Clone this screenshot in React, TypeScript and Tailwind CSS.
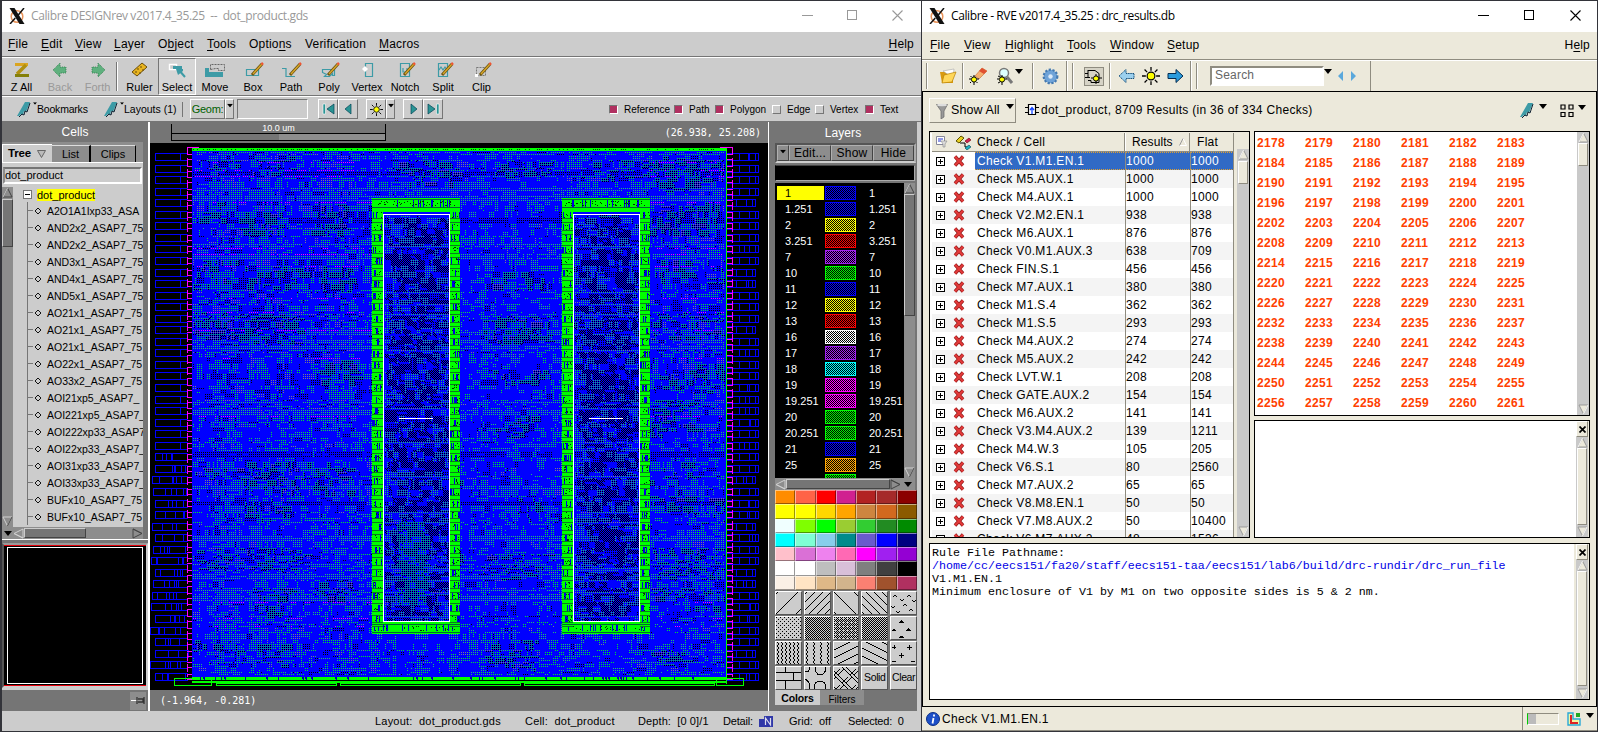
import React, { ReactNode } from "react";

const SANS = "font-['Liberation_Sans',Arial,sans-serif]";

function seeded(seed: number) {
  let s = seed;
  return () => {
    s = (s * 1664525 + 1013904223) >>> 0;
    return s / 4294967296;
  };
}

/* ---------- shared bits ---------- */

function Mn({ t }: { t: string }) {
  const i = t.indexOf("&");
  return (
    <span className="whitespace-pre">
      {t.slice(0, i)}
      <span className="underline underline-offset-2">{t[i + 1]}</span>
      {t.slice(i + 2)}
    </span>
  );
}

function Down({ className = "" }: { className?: string }) {
  return (
    <svg width="8" height="5" viewBox="0 0 8 5" className={"shrink-0 " + className}>
      <path d="M0 0h8L4 5z" fill="#000" />
    </svg>
  );
}

function XLogo() {
  return (
    <svg width="16" height="16" viewBox="0 0 16 16" className="shrink-0">
      <circle cx="8" cy="8.5" r="5.8" fill="none" stroke="#e8935a" strokeWidth="1.5" />
      <path d="M0.5 0h5L15.5 16h-5z" fill="#111" />
      <path d="M15 0L9.3 7M6.3 10L1 16" stroke="#111" strokeWidth="1.5" />
    </svg>
  );
}

function WinControls({ color, gap }: { color: string; gap: string }) {
  return (
    <div className={"flex items-center " + gap}>
      <svg width="11" height="11"><path d="M0 5.5h11" stroke={color} /></svg>
      <svg width="11" height="11"><rect x=".5" y=".5" width="9" height="9" fill="none" stroke={color} /></svg>
      <svg width="11" height="11"><path d="M.5 .5l10 10M10.5 .5l-10 10" stroke={color} strokeWidth="1.1" /></svg>
    </div>
  );
}

function Sun({ size = 14 }: { size?: number }) {
  return (
    <svg width={size} height={size} viewBox="0 0 14 14" className="shrink-0">
      <path d="M7 0v3M7 11v3M0 7h3M11 7h3M2 2l2 2M10 10l2 2M12 2l-2 2M4 10l-2 2" stroke="#000" strokeWidth="1" />
      <circle cx="7" cy="7" r="3" fill="#ff0" stroke="#000" strokeWidth=".9" />
    </svg>
  );
}

function Marker() {
  return (
    <svg width="14" height="15" viewBox="0 0 14 15" className="shrink-0">
      <path d="M8 0h5L9 10l-2-1-1 4-2-1-2 2H0z" fill="#3d9ba6" />
      <path d="M13 1l-3 9-2-1-1 4-2-1-3 3" fill="none" stroke="#123" strokeWidth="1" />
    </svg>
  );
}

/* ---------- left window ---------- */

const raised = "border border-t-white border-l-white border-b-[#757575] border-r-[#757575]";
const sunken = "border border-t-[#757575] border-l-[#757575] border-b-white border-r-white";

const Pencil = () => (
  <>
    <path d="M9 12l10-11" stroke="#6b5410" strokeWidth="3" />
    <path d="M10 11l9-10" stroke="#d8a628" strokeWidth="1.4" />
    <path d="M18.5 1.5l1.5-1.5" stroke="#e53" strokeWidth="2.5" />
  </>
);

function ToolIcon({ k }: { k: string }) {
  const t = "#3d9ba6";
  const body: Record<string, ReactNode> = {
    "Z All": <><path d="M4 1.500h13" stroke="#daa520" strokeWidth="3" /><path d="M15 2L6 11" stroke="#b0900f" strokeWidth="3.600" /><path d="M4 12.500h14" stroke="#84800a" strokeWidth="3" /></>,
    Back: <path d="M3 7l7-7v4h6v6h-6v4z" fill="#5fb07e" stroke="#2c7a48" strokeWidth=".8" strokeDasharray="1 1" />,
    Forth: <path d="M18 7l-7-7v4H5v6h6v4z" fill="#5fb07e" stroke="#2c7a48" strokeWidth=".8" strokeDasharray="1 1" />,
    Ruler: <><path d="M3 9L13 0l5 4L8 13z" fill="#e8b420" stroke="#6b4d08" /><path d="M6 9h2m0-3h2m0 4h2m-1-6h2m0 3h2" stroke="#6b4d08" /></>,
    Select: <><path d="M2.500 1.500h7v5h-7z" fill="#ccc" stroke="#fff" strokeWidth="1.400" /><path d="M6 3h9v3H6z" fill={t} /><path d="M11 6l7 8" fill="none" stroke={t} strokeWidth="2" /><path d="M9 6h7v2l-5 4z" fill={t} /></>,
    Move: <><path d="M0 5h4v4h14v5H0z" fill={t} /><path d="M5.500 6.500v-5h14v6h-6v-2h-3z" fill="none" stroke="#666" strokeDasharray="2 1" /></>,
    Box: <><path d="M3.500 6.500h12v6h-12z" fill="none" stroke={t} strokeWidth="1.200" /><Pencil /></>,
    Path: <><path d="M1 5.500h4v8h9" fill="none" stroke={t} strokeWidth="1.200" /><Pencil /></>,
    Poly: <><path d="M3.500 6.500h12v6h-2v-2l-3 3h-5l2-2-4-2z" fill="none" stroke={t} strokeWidth="1.200" /><Pencil /></>,
    Vertex: <><path d="M8.500 .500h7v13h-7z" fill="none" stroke={t} strokeWidth="1.200" /><path d="M8 3l3 3-3 3-3-3z" fill="#fff" /></>,
    Notch: <><path d="M5.500 .500h9v13h-9zM8 5v4h4v-4" fill="none" stroke={t} strokeWidth="1.200" /><Pencil /></>,
    Split: <><path d="M5.500 .500h9v13h-9zM6 7l2-3 2 3 2-3 2 3" fill="none" stroke={t} strokeWidth="1.200" /><Pencil /></>,
    Clip: <><path d="M5.500 4.500h9v8h-9z" fill="none" stroke="#777" strokeDasharray="2 1" /><path d="M4 11h3v3H4z" fill="#fff" /><Pencil /></>,
  };
  return <svg width="21" height="15" viewBox="0 0 21 15" overflow="visible" className="shrink-0">{body[k]}</svg>;
}

function Tool({ k, className, dim }: { k: string; className: string; dim?: boolean }) {
  const sel = k === "Select";
  return (
    <div className={`flex h-[37px] shrink-0 flex-col items-center pt-[5px] ${className} ${sel ? "border border-b-white border-l-[#757575] border-r-white border-t-[#757575] bg-[#d6d6d6] !pt-[4px]" : ""}`}>
      <ToolIcon k={k} />
      <span className={`mt-[2px] whitespace-pre text-[11px] leading-[15px] ${dim ? "text-[#999]" : "text-black"}`}>{k}</span>
    </div>
  );
}

function NavBtn({ children, className }: { children: ReactNode; className: string }) {
  return <div className={`flex h-[20px] shrink-0 items-center justify-center ${raised} ${className}`}>{children}</div>;
}

function Check({ on, label, className }: { on?: boolean; label: string; className: string }) {
  return (
    <div className={`flex shrink-0 items-center gap-[6px] ${className}`}>
      <span className={`h-[9px] w-[9px] shrink-0 ${on ? "bg-[#b03060]" : "bg-[#ccc]"} ${on ? sunken : raised}`} />
      <span className="text-[10px]">{label}</span>
    </div>
  );
}

function Tri({ d, fill = "#8d8d8d", hi = "#d0d0d0", lo = "#444" }: { d: "u" | "d" | "l" | "r"; fill?: string; hi?: string; lo?: string }) {
  const rot = { u: 0, r: 90, d: 180, l: 270 }[d];
  return (
    <svg width="11" height="11" viewBox="0 0 11 11" className="shrink-0">
      <g transform={`rotate(${rot} 5.5 5.5)`}>
        <path d="M5.500 1l4.500 9h-9z" fill={fill} stroke={d === "u" || d === "r" ? lo : hi} />
        <path d="M5.500 1l-4.500 9" stroke={d === "u" || d === "l" ? hi : lo} />
      </g>
    </svg>
  );
}

const CELLS = [
  "A2O1A1Ixp33_ASA", "AND2x2_ASAP7_75", "AND2x2_ASAP7_75", "AND3x1_ASAP7_75", "AND4x1_ASAP7_75", "AND5x1_ASAP7_75",
  "AO21x1_ASAP7_75", "AO21x1_ASAP7_75", "AO21x1_ASAP7_75", "AO22x1_ASAP7_75", "AO33x2_ASAP7_75", "AOI21xp5_ASAP7_",
  "AOI221xp5_ASAP7_", "AOI222xp33_ASAP7", "AOI22xp33_ASAP7_", "AOI31xp33_ASAP7_", "AOI33xp33_ASAP7_", "BUFx10_ASAP7_75", "BUFx10_ASAP7_75",
];

function CellsPanel() {
  return (
    <div className="flex w-[146px] shrink-0 flex-col bg-[#757575]">
      <div className="flex h-[20px] items-center justify-center text-[12px] tracking-[.1px] text-white">Cells</div>
      <div className="flex h-[21px] w-[141px] items-end border-b border-white bg-[#8d8d8d]">
        <div className="flex h-[18px] w-[50px] items-center gap-[6px] border-l border-t border-white bg-[#ccc] pl-[5px] text-[11.500px] font-bold tracking-[-.2px]">
          Tree
          <svg width="9" height="8" className="shrink-0"><path d="M.5 .5h8L4.500 7.500z" fill="#bbb" stroke="#666" /></svg>
        </div>
        <div className="flex h-[17px] w-[39px] items-center justify-center border-r-2 border-t border-black border-t-[#ddd] text-[11px]">List</div>
        <div className="flex h-[17px] w-[45px] items-center justify-center border-r border-t border-black border-t-[#ddd] text-[11px]">Clips</div>
      </div>
      <div className="flex h-[24px] w-[141px] shrink-0 items-center bg-[#ccc] pl-px">
        <div className="flex h-[17px] w-[139px] items-center border-2 border-b-white border-l-[#8d8d8d] border-r-white border-t-[#757575] text-[11px]">dot_product</div>
      </div>
      <div className="flex h-[340px] w-[141px] shrink-0 bg-[#ccc]">
        <div className="flex w-[11px] shrink-0 flex-col bg-[#8d8d8d]">
          <Tri d="u" />
          <div className="mt-px h-[48px] border border-b-[#444] border-l-[#ccc] border-r-[#444] border-t-[#ccc] bg-[#757575]" />
          <div className="flex-1" />
          <Tri d="d" />
        </div>
        <div className="flex min-w-0 flex-1 flex-col overflow-hidden">
          <div className="flex h-[15px] shrink-0 items-center pl-[10px]">
            <span className="flex h-[9px] w-[9px] items-center justify-center border border-[#757575] bg-white"><span className="h-px w-[5px] bg-black" /></span>
            <span className="ml-[5px] h-[12px] bg-[#ff0] text-[11px] leading-[12px]">dot_product</span>
          </div>
          {CELLS.map((c, i) => (
            <div key={i} className="ml-[14px] flex h-[17px] shrink-0 items-center border-l border-[#757575]">
              <span className="h-px w-[5px] shrink-0 bg-[#757575]" />
              <svg width="8" height="8" className="ml-px shrink-0"><path d="M4 1l3 3-3 3-3-3z" fill="none" stroke="#111" /></svg>
              <span className="ml-[5px] whitespace-nowrap pt-[2px] text-[10.500px]">{c}</span>
            </div>
          ))}
        </div>
      </div>
      <div className="flex h-[12px] w-[141px] shrink-0 items-center bg-[#8d8d8d]">
        <div className="flex w-[11px] justify-center bg-[#8d8d8d]"><Down /></div>
        <Tri d="l" />
        <div className="h-[10px] w-[62px] border border-b-[#444] border-l-[#ccc] border-r-[#444] border-t-[#ccc] bg-[#757575]" />
        <div className="flex-1" />
        <Tri d="r" />
      </div>
      <div className="h-px bg-white" />
      <div className="mt-[3px] flex h-[145px] shrink-0 flex-col border-2 border-[#ccc] border-l-[#555] border-t-[#999] bg-black">
        <div className="h-px bg-red-600" />
        <div className="mx-[3px] my-px flex-1 border border-white" />
        <div className="h-px bg-red-600" />
      </div>
      <div className="h-[2px] bg-[#ccc]" />
      <div className="flex flex-1 items-center justify-end pr-[2px]">
        <div className="flex h-[18px] w-[16px] items-center justify-center bg-[#8d8d8d]">
          <svg width="14" height="9"><path d="M0 4.500h7" stroke="#fff" /><path d="M6 1v7M7 3h5v3H7M13 1v7" stroke="#333" strokeWidth="1.300" fill="#999" /></svg>
        </div>
      </div>
    </div>
  );
}

/* Chip layout plot; local origin is the top-left of the black drawing area. */
const OX = 150;
const OY = 143;
const CELL_ROW = 11.55;

type Seg = { x: number; w: number; k: string };

function buildPlot() {
  const r = seeded(151);
  const X0 = 193, X1 = 725, Y0 = 152, Y1 = 676;
  const out: Record<string, string> = { g: "", k: "", y: "", m: "", t: "" };
  const patches: [number, number, number, number, number][] = [];
  for (const y of [168, 215, 272, 325, 376, 418, 475, 505, 560, 596, 655])
    for (const x of [212, 264, 335, 425, 515, 606, 672, 708]) {
      if (r() < 0.28) continue;
      patches.push([x + (r() - 0.5) * 16, y + (r() - 0.5) * 10, 12 + r() * 18, 6 + r() * 9, 0.4 + r() * 0.5 - (y > 420 ? 0.12 : 0)]);
    }
  const field = (x: number, y: number) => {
    let v = 0;
    for (const [px, py, w, h, a] of patches) {
      const dx = Math.abs(x - px) / w, dy = Math.abs(y - py) / h;
      if (dx < 1.3 && dy < 1.3) v = Math.max(v, a * Math.min(1, (1.3 - dx) * 3) * Math.min(1, (1.3 - dy) * 3));
    }
    return v;
  };
  const lane: number[] = [];
  for (let x = 0; x < 300; x++) lane.push(r());
  let y = Y0;
  while (y < Y1) {
    const phase = (y - Y0) % CELL_ROW;
    const rail = phase < 2.2;
    const rows = rail ? 1 : 1 + Math.floor(r() * 3);
    const top = y < 420;
    const rowK = r();
    const stripe = top ? r() < 0.22 : r() < 0.1;
    const mag = r() < (top ? 0.14 : 0.04);
    const segs: Seg[] = [];
    let x = X0;
    while (x < X1) {
      const w = Math.min(2 * (1 + Math.floor(r() * r() * 6)), X1 - x);
      const inside = y > 214 && y < 621 && ((x > 383 && x < 449) || (x > 573 && x < 639));
      const q = r();
      let k = "";
      if (inside) {
        const cx = x < 500 ? 416 : 606;
        const core = Math.abs(x - cx) < 22;
        const hot = x < 500 && y > 520 && y < 605 && Math.abs(x - 410) < 14;
        if (hot) k = q < 0.7 ? "gk" : "g";
        else if (rail) k = q < 0.85 ? "t" : "y";
        else if (q < (core ? 0.5 : 0.25)) k = "kk";
        else if (q < (core ? 0.72 : 0.5)) k = "tk";
        else if (q < 0.92) k = r() < 0.6 ? "t" : "k";
      } else {
        const f = field(x, y);
        const side = x < 350 || x > 650 ? (top ? 1 : 0.35) : 0.1;
        const ln = lane[Math.floor(x / 4)];
        if (q < f) k = r() < 0.5 ? "gk" : r() < 0.45 ? "g" : r() < 0.6 ? "k" : "yk";
        else if (stripe && q < 0.92) k = rowK < 0.25 ? "k" : "t";
        else {
          const p = 0.5 + (ln - 0.5) * 0.75 + side * 0.14 + (rail ? 0.12 : 0);
          if (r() < p) {
            const c = r();
            k = c < 0.1 + side * 0.14 ? "k" : c < 0.14 + side * 0.26 ? "y" : c < 0.5 ? "t" : "g";
          }
        }
      }
      if (k) segs.push({ x, w, k });
      x += w;
    }
    for (let n = 0; n < rows && y < Y1; n++, y += 2) {
      for (const s of segs) {
        if (r() < 0.08) continue;
        const isMag = mag && n === 0 && (s.x < 370 || s.x > 650) && r() < 0.5;
        const k = isMag ? "m" : s.k;
        out[k[0]] += `M${s.x - OX} ${y - OY + 0.5}h${s.w}`;
        if (k[1]) out[k[1]] += `M${s.x - OX + 1} ${y - OY + 1.5}h${s.w}`;
      }
    }
  }
  return out;
}
const PLOT = buildPlot();

function buildLadders() {
  const r = seeded(77);
  let blue = "", pink = "";
  for (let i = 0; i < 46; i++) {
    const y = Math.round(153 + i * CELL_ROW) - OY;
    const low = i > 25;
    const x0 = (low && r() < 0.35 ? 150 + Math.floor(r() * 4) : 155) - OX;
    blue += `M${x0 + 0.5} ${y + 0.5}H38M${x0 + 0.5} ${y + 7.5}H38M${x0 + 0.5} ${y}v8`;
    if (!low) blue += `M30.500 ${y}v8`;
    else for (let k = 0; k < 5; k++) blue += `M${x0 + 4 + Math.floor(r() * 30) + 0.5} ${y}v8`;
    const e = (r() < 0.12 ? 756 : 759) - OX;
    blue += `M577 ${y + 0.5}H${e}M577 ${y + 7.5}H${e}M${e - 0.5} ${y}v8M${e - 3.5} ${y}v8M${e - 9.5} ${y}v8M${e - 19.5} ${y}v8`;
    if (r() < 0.4) blue += `M${e - 6.5 - Math.floor(r() * 9)} ${y}v8`;
    pink += `M37 ${y + 1.5}h5M37 ${y + 6.5}h5M577 ${y + 1.5}h6M577 ${y + 6.5}h6`;
  }
  return { blue, pink };
}
const LADDER = buildLadders();

function buildFrame(x0: number, seed: number) {
  const r = seeded(seed);
  let gaps = "", bands = "", holes = "", seams = "";
  const x = x0 - OX;
  for (let y = 211 - OY; y < 616 - OY; y += CELL_ROW) {
    const yy = Math.round(y);
    for (const c of [x, x + 78]) {
      const w = c === x ? 11 : 10;
      bands += `M${c} ${yy + 8}h${w}v3h${-w}z`;
      seams += `M${c} ${yy + 7.5}h${w}M${c} ${yy + 11.5}h${w}`;
      for (let k = 0; k < 3; k++) if (r() < 0.6) gaps += `M${c + 1 + Math.floor(r() * 9)} ${yy + 1}h1v6h-1z`;
      if (r() < 0.35) gaps += `M${c + Math.floor(r() * 8)} ${yy + 1}h2v6h-2z`;
      for (let k = 0; k < 8; k++) if (r() < 0.6) holes += `M${c + 2 + Math.floor(r() * 8)} ${yy + 1 + Math.floor(r() * 6)}h1v1h-1z`;
    }
  }
  for (let k = 0; k < 26; k++) {
    const gx = x + 8 + Math.floor(r() * 74);
    if (k % 2) gaps += `M${gx} ${200 - OY}h1v7h-1zM${x + 2 + Math.floor(r() * 82)} ${625 - OY}h1v6h-1z`;
    for (let n = 0; n < 3; n++) holes += `M${x + 3 + Math.floor(r() * 80)} ${(n === 2 ? 626 : 201) - OY + Math.floor(r() * 5)}h1v1h-1z`;
  }
  return { x, gaps, bands, holes, seams };
}
const FRAMES = [buildFrame(372, 9), buildFrame(562, 31)];

function GreenEdge() {
  const r = seeded(5);
  let top = "", bot = "";
  for (let x = 43; x < 574; x += 2) if (r() < 0.45) top += `M${x} 6h1v1h-1z`;
  for (let x = 50; x < 574; x += 3) if (r() < 0.3) bot += `M${x} 534h${1 + Math.floor(r() * 2)}v3h-1z`;
  return (
    <>
      <path d="M42 5h534v3H42z" fill="#0f0" />
      <path d={top} fill="#040" />
      <path d="M42 534h534v3H42zM42 538h534v2H42z" fill="#0f0" />
      <path d="M24.500 535.500h37v7h-37zM66.500 540.500h120v2h-120zM190 540.500h180v2h-180zM374 540.500h190v2h-190zM566.500 535.500h27v7h-27z" fill="none" stroke="#0f0" />
      <path d={bot} fill="#00a" />
      <path d="M576.500 5v536" stroke="#0f0" />
    </>
  );
}

function LayoutPlot() {
  return (
    <svg width="618" height="547" viewBox="0 0 618 547" shapeRendering="crispEdges" className="block shrink-0 bg-black">
      <rect x="42" y="6" width="534" height="531" fill="#00f" />
      <g fill="none" strokeWidth="1" strokeDasharray="1 1">
        <path d={PLOT.g} stroke="#00e632" />
        <path d={PLOT.t} stroke="#20c070" />
        <path d={PLOT.y} stroke="#7c7c8c" />
        <path d={PLOT.k} stroke="#000" />
        <path d={PLOT.m} stroke="#f0f" />
      </g>
      <path d={LADDER.blue} stroke="#00f" fill="none" />
      <path d={LADDER.pink} stroke="#f0f" fill="none" />
      <path d="M37.500 4v530M582.500 4v530" stroke="#f0f" strokeDasharray="8 3" />
      <path d="M37 4.500h12M570 4.500h13" stroke="#f0f" />
      <GreenEdge />
      {FRAMES.map((f, i) => (
        <g key={i}>
          <path d={`M${f.x} 55h88v436h-88zM${f.x + 11} 71v408h67v-408z`} fill="#0f0" fillRule="evenodd" />
          <path d={f.gaps} fill="#00d" />
          <path d={f.holes} fill="#030" />
          <path d={f.bands} fill="#0f0" />
          <path d={f.seams} stroke="#0a7a20" />
          <path d={`M${f.x} 56.500h88M${f.x} 64.500h88M${f.x} 481.500h88M${f.x} 489.500h88`} stroke="#063" />
          <path d={`M${f.x + 11} 69.500h67`} stroke="#00f" strokeWidth="2" />
          <rect x={f.x + 11.5} y="71.500" width="66" height="407" fill="none" stroke="#fff" />
          <path d={`M${f.x + 27} 275.500h34`} stroke="#fff" />
        </g>
      ))}
    </svg>
  );
}

function CanvasPanel() {
  const mono = "font-['DejaVu_Sans_Mono',monospace] text-[10px] text-white";
  return (
    <div className="flex w-[618px] shrink-0 flex-col bg-[#757575]">
      <div className="flex h-[21px] items-start justify-between pl-[21px] pr-[7px]">
        <div className="mt-[2px] flex h-[17px] w-[215px] flex-col border-x border-black">
          <div className="h-[9px] text-center text-[9px] leading-[8px] text-white">10.0 um</div>
          <div className="flex h-[8px] border-y border-black"><div className="w-1/2" /><div className="w-1/2 bg-[#8d8d8d]" /></div>
        </div>
        <div className={`pt-[3px] ${mono}`}>(26.938, 25.208)</div>
      </div>
      <LayoutPlot />
      <div className={`pl-[10px] pt-[3px] ${mono}`}>(-1.964, -0.281)</div>
    </div>
  );
}

const LAYERS: [string, string][] = [
  ["1", "#0000ff"], ["1.251", "#0000ff"], ["2", "#ffff00"], ["3.251", "#ff0000"], ["7", "#a020f0"], ["10", "#00ff00"], ["11", "#0000ff"],
  ["12", "#ffff00"], ["13", "#ff0000"], ["16", "#ffffff"], ["17", "#a020f0"], ["18", "#00ffff"], ["19", "#ff00ff"], ["19.251", "#ff00ff"],
  ["20", "#00ff00"], ["20.251", "#00ff00"], ["21", "#0000ff"], ["25", "#ffa500"], ["", "#00ff00"],
];

const PALETTE = [
  ["#ff8c00", "#ff6347", "#ff0000", "#d02090", "#b22222", "#a52a2a", "#8b0000"],
  ["#ffff00", "#ffff00", "#ffd700", "#ffa500", "#cd853f", "#d2691e", "#8b5a00"],
  ["#f0ffff", "#7fff00", "#00ff00", "#9acd32", "#32cd32", "#228b22", "#008b00"],
  ["#00ffff", "#7fffd4", "#87ceeb", "#008b8b", "#6a5acd", "#0000ff", "#000080"],
  ["#ffc0cb", "#da70d6", "#ee82ee", "#ff69b4", "#ff00ff", "#a020f0", "#9400d3"],
  ["#ffffff", "#ffffff", "#bebebe", "#d8bfd8", "#7f7f7f", "#404040", "#000000"],
  ["#faf0e6", "#ffe4c4", "#deb887", "#d2b48c", "#fa8072", "#a0522d", "#b03060"],
];

function lines(step: number, dx: number, dy: number) {
  let d = "";
  for (let c = -60; c < 90; c += step) d += `M${c} ${dy > 0 ? 0 : 22}l${(dx * 22) / Math.abs(dy)} ${dy > 0 ? 22 : -22}`;
  return d;
}
function dots(test: (x: number, y: number) => boolean) {
  let d = "";
  for (let y = 0; y < 22; y++) for (let x = 0; x < 25; x++) if (test(x, y)) d += `M${x} ${y + 0.5}h1`;
  return d;
}
function zig(step: number) {
  let d = "";
  for (let x = 1; x < 27; x += step) d += `M${x} 0l2 2-2 2 2 2-2 2 2 2-2 2 2 2-2 2 2 2-2 2 2 2`;
  return d;
}
function weave() {
  let d = "";
  for (let y = -8; y < 24; y += 8)
    for (let x = -8; x < 28; x += 8) {
      const odd = ((x + y) / 8) % 2 !== 0;
      for (let k = 0; k < 8; k += 4) d += odd ? `M${x + k} ${y}l8 8` : `M${x + k} ${y + 8}l6-6`;
    }
  return d;
}
const FILLS: string[] = [
  lines(20, 1, -1), lines(8, 1, -1), lines(20, 1, 1), lines(8, 1, 1),
  "M2 5l2-2 2 2M16 5l2-2 2 2M9 7l2 2 2-2M21 8l2 2 2-2M0 14l2 2 2-2M12 14l2-2 2 2M18 19l2-2 2 2M5 19l2 2 2-2",
  dots((x, y) => (y % 4 === 0 && x % 4 === 0) || (y % 4 === 2 && x % 4 === 2)), dots((x, y) => (x + y) % 2 === 0),
  dots((x, y) => (x + y) % 2 === 0 && !(x % 4 === 1 && y % 4 === 1)), dots((x, y) => (x + y) % 2 === 0),
  "M8 5h5M9 4h3M10 3h1M1 13h4M2 12h2M15 13h5M16 12h3M17 11h1M8 20h5M9 19h3",
  zig(4), zig(7), lines(16, 2, -1), lines(16, 2, 1),
  "M3 3v4M1 5h4M18 3v5M16 5h5M10 11v5M8 13h5M1 19h4M20 19h4",
  "M0 5.500h25M0 13.500h25M9 0v5M17 5v8M9 13v9",
  "M0 5q5 0 5-5M10 0q0 7 5 8 6-1 6-8M0 12q5 2 5 10M9 22q0-8 6-8 6 0 6 8",
  weave(),
];

function LayersPanel() {
  const hdr = "flex items-center justify-center border border-t-[#b0b0b0] border-l-[#b0b0b0] border-b-[#444] border-r-[#444] bg-[#8d8d8d] text-[12px] tracking-[.2px]";
  return (
    <div className="flex w-[152px] shrink-0 bg-[#ccc]">
      <div className="flex w-[148px] shrink-0 flex-col bg-[#757575] pl-[6px] text-[12px]">
        <div className="flex h-[21px] items-center justify-center pr-[6px] text-[12px] tracking-[.1px] text-white">Layers</div>
        <div className="flex h-[20px] w-[141px] border-2 border-[#555] border-b-[#ccc] border-r-[#aaa]">
          <div className={`${hdr} w-[12px] !items-start pt-[3px]`}><Down className="scale-75" /></div>
          <div className={`${hdr} w-[42px]`}>Edit...</div>
          <div className={`${hdr} w-[42px]`}>Show</div>
          <div className={`${hdr} flex-1`}>Hide</div>
        </div>
        <div className="mt-[2px] h-[16px] w-[140px] border border-b-[#aaa] border-r-[#aaa] border-t-[#444] bg-black" />
        <div className="mt-[2px] flex h-[295px] w-[140px] shrink-0">
          <div className="flex min-w-0 flex-1 flex-col overflow-hidden bg-black pl-[2px] pt-[2px] text-white">
            {LAYERS.map(([n, c], i) => (
              <div key={i} className="flex h-[16px] shrink-0 items-center">
                <div className={`flex h-[14px] w-[47px] shrink-0 items-center pl-[8px] pt-px text-[11px] ${i === 0 ? "bg-[#ff0] text-black" : ""}`}>{n}</div>
                <svg width="31" height="14" className="ml-px shrink-0" shapeRendering="crispEdges">
                  <defs>
                    <pattern id={`ly${i}`} width="2" height="2" patternUnits="userSpaceOnUse">
                      <rect width="1" height="1" fill={c} /><rect x="1" y="1" width="1" height="1" fill={c} />
                    </pattern>
                  </defs>
                  <rect x=".5" y=".5" width="30" height="13" fill={`url(#ly${i})`} stroke={c} />
                </svg>
                <div className="ml-[13px] h-[14px] pt-px text-[11px] leading-[13px]">{n}</div>
              </div>
            ))}
          </div>
          <div className="flex w-[11px] shrink-0 flex-col bg-[#8d8d8d]">
            <Tri d="u" />
            <div className="h-[122px] border border-b-[#444] border-l-[#ccc] border-r-[#444] border-t-[#ccc] bg-[#757575]" />
            <div className="flex-1" />
            <Tri d="d" />
          </div>
        </div>
        <div className="flex h-[12px] w-[140px] items-center bg-[#8d8d8d]">
          <Tri d="l" />
          <div className="h-[10px] flex-1 border border-b-[#444] border-l-[#ccc] border-r-[#444] border-t-[#ccc] bg-[#757575]" />
          <Tri d="r" />
          <div className="flex w-[14px] justify-center"><Down /></div>
        </div>
        <div className="grid h-[100px] w-[142px] shrink-0 grid-cols-7 grid-rows-7 bg-[#aaa]">
          {PALETTE.flat().map((c, i) => (
            <div key={i} className="border border-b-black/40 border-l-white/50 border-r-black/40 border-t-white/50" style={{ backgroundColor: c }} />
          ))}
        </div>
        <div className="grid h-[100px] w-[142px] shrink-0 grid-cols-5 grid-rows-[repeat(4,24px)] gap-x-[2px] gap-y-px bg-[#757575] pt-px">
          {FILLS.map((d, i) => (
            <div key={i} className="overflow-hidden border border-b-[#555] border-l-white border-r-[#555] border-t-white bg-[#ccc]">
              <svg width="25" height="22" shapeRendering="crispEdges" className="block"><path d={d} fill="none" stroke="#000" strokeWidth="1" /></svg>
            </div>
          ))}
          {["Solid", "Clear"].map((t) => (
            <div key={t} className="flex items-center justify-center border border-b-[#555] border-l-white border-r-[#555] border-t-white bg-[#ccc] text-[10.500px] tracking-[-.4px]">{t}</div>
          ))}
        </div>
        <div className="flex h-[16px] items-start">
          <div className="flex h-[15px] w-[45px] items-center justify-center bg-[#ccc] pt-[2px] text-[10.500px] font-bold tracking-[-.1px]">Colors</div>
          <div className="flex h-[15px] w-[44px] items-center justify-center bg-[#8d8d8d] pt-[3px] text-[10px]">Filters</div>
        </div>
      </div>
    </div>
  );
}

function TealTri({ flip, bar }: { flip?: boolean; bar?: boolean }) {
  return (
    <svg width="13" height="12" viewBox="0 0 13 12">
      <g transform={flip ? "" : "translate(13 0) scale(-1 1)"}>
        <path d={bar ? "M1 1l7 5-7 5z" : "M4 1l6 5-6 5z"} fill="#2a9494" stroke="#045" strokeWidth=".7" />
        {bar && <path d="M9.500 1h2.500v10H9.500z" fill="#2a9494" stroke="#fff" strokeWidth=".6" />}
      </g>
    </svg>
  );
}

function LeftWindow() {
  return (
    <div className="flex h-[730px] w-[919px] shrink-0 flex-col bg-[#ccc]">
      <div className="flex h-[31px] shrink-0 items-center bg-white pb-[2px] pl-[7px] pr-[18px]">
        <XLogo />
        <span className="ml-[6px] flex-1 whitespace-pre font-['Open_Sans',sans-serif] text-[12px] tracking-[-.38px] text-[#999]">Calibre DESIGNrev v2017.4_35.25  --  dot_product.gds</span>
        <WinControls color="#999" gap="gap-[34px]" />
      </div>
      <div className="flex h-[25px] shrink-0 items-center border-b border-[#757575] pl-[6px] text-[12px] tracking-[.2px]">
        <div className="w-[33px]"><Mn t="&File" /></div>
        <div className="w-[34px]"><Mn t="&Edit" /></div>
        <div className="w-[39px]"><Mn t="&View" /></div>
        <div className="w-[44px]"><Mn t="&Layer" /></div>
        <div className="w-[49px]"><Mn t="O&bject" /></div>
        <div className="w-[42px]"><Mn t="&Tools" /></div>
        <div className="w-[56px]"><Mn t="Optio&ns" /></div>
        <div className="w-[74px]"><Mn t="Verific&ation" /></div>
        <div className="flex-1"><Mn t="&Macros" /></div>
        <div className="pr-[7px]"><Mn t="&Help" /></div>
      </div>
      <div className="flex h-[39px] shrink-0 border-b border-t border-b-[#757575] border-t-white">
        <Tool k="Z All" className="w-[39px]" />
        <Tool k="Back" className="w-[38px]" dim />
        <Tool k="Forth" className="w-[37px]" dim />
        <div className="my-[4px] mr-[3px] w-[2px] border-l border-[#757575] bg-white" />
        <Tool k="Ruler" className="w-[37px]" />
        <Tool k="Select" className="w-[38px]" />
        <Tool k="Move" className="w-[38px]" />
        <Tool k="Box" className="w-[38px]" />
        <Tool k="Path" className="w-[38px]" />
        <Tool k="Poly" className="w-[38px]" />
        <Tool k="Vertex" className="w-[38px]" />
        <Tool k="Notch" className="w-[38px]" />
        <Tool k="Split" className="w-[38px]" />
        <Tool k="Clip" className="w-[39px]" />
      </div>
      <div className="flex h-[26px] shrink-0 items-center border-b border-t border-b-[#757575] border-t-white text-[11px]">
        <div className="flex w-[87px] items-center pl-[15px]"><Marker /><Down className="mb-3 scale-50" /><span className="-ml-[2px] pt-[2px] text-[10.500px] tracking-[-.2px]">Bookmarks</span></div>
        <div className="flex w-[93px] items-center pl-[15px]"><Marker /><Down className="mb-3 scale-50" /><span className="-ml-[2px] pt-[2px] text-[10.500px]">Layouts (1)</span></div>
        <div className="mr-[7px] h-[15px] w-px border-l border-[#757575]" />
        <NavBtn className="w-[35px]"><span className="text-[11px] tracking-[-.3px] text-[#005f00]">Geom:</span></NavBtn>
        <NavBtn className="w-[9px]"><Down className="mb-2 scale-75" /></NavBtn>
        <div className={`ml-[3px] mr-[10px] h-[20px] w-[71px] shrink-0 ${sunken}`} />
        <NavBtn className="w-[20px]"><TealTri bar /></NavBtn>
        <NavBtn className="mr-[8px] w-[20px]"><TealTri /></NavBtn>
        <NavBtn className="w-[20px]"><Sun size={13} /></NavBtn>
        <NavBtn className="mr-[8px] w-[9px]"><Down className="mb-2 scale-75" /></NavBtn>
        <NavBtn className="w-[20px]"><TealTri flip /></NavBtn>
        <NavBtn className="w-[20px]"><TealTri flip bar /></NavBtn>
        <div className="flex-1" />
        <Check on label="Reference" className="w-[65px]" />
        <Check on label="Path" className="w-[41px]" />
        <Check on label="Polygon" className="w-[57px]" />
        <Check label="Edge" className="w-[43px]" />
        <Check label="Vertex" className="w-[50px]" />
        <Check on label="Text" className="w-[56px]" />
      </div>
      <div className="flex h-[589px] shrink-0">
        <CellsPanel />
        <div className="w-[2px] shrink-0 bg-white" />
        <CanvasPanel />
        <div className="w-px shrink-0 bg-white" />
        <LayersPanel />
      </div>
      <div className="flex flex-1 items-center pl-[373px] text-[11px]">
        <span className="w-[150px] tracking-[.2px]">Layout:&nbsp; dot_product.gds</span>
        <span className="w-[113px] tracking-[.2px]">Cell:&nbsp; dot_product</span>
        <span className="w-[85px] tracking-[.1px]">Depth:&nbsp; [0 0]/1</span>
        <span className="w-[36px] tracking-[-.2px]">Detail:</span>
        <svg width="15" height="14" className="mr-[15px]"><path d="M0 5h5V2h9v11H0z" fill="#3038a8" /><path d="M6.500 11V4l5 7V4" fill="none" stroke="#dde" strokeWidth="1.200" /></svg>
        <span className="w-[59px]">Grid:&nbsp; off</span>
        <span className="tracking-[-.2px]">Selected:&nbsp; 0</span>
      </div>
    </div>
  );
}

/* ---------- right window ---------- */

const ROWS: [string, string, string][] = [
  ["V1.M1.EN.1", "1000", "1000"], ["M5.AUX.1", "1000", "1000"], ["M4.AUX.1", "1000", "1000"], ["V2.M2.EN.1", "938", "938"],
  ["M6.AUX.1", "876", "876"], ["V0.M1.AUX.3", "638", "709"], ["FIN.S.1", "456", "456"], ["M7.AUX.1", "380", "380"],
  ["M1.S.4", "362", "362"], ["M1.S.5", "293", "293"], ["M4.AUX.2", "274", "274"], ["M5.AUX.2", "242", "242"],
  ["LVT.W.1", "208", "208"], ["GATE.AUX.2", "154", "154"], ["M6.AUX.2", "141", "141"], ["V3.M4.AUX.2", "139", "1211"],
  ["M4.W.3", "105", "205"], ["V6.S.1", "80", "2560"], ["M7.AUX.2", "65", "65"], ["V8.M8.EN.1", "50", "50"],
  ["V7.M8.AUX.2", "50", "10400"], ["V6.M7.AUX.2", "48", "1536"],
];

function Scroll({ thumb, className = "" }: { thumb: string; className?: string }) {
  return (
    <div className={`flex w-[12px] shrink-0 flex-col items-center bg-[#c9c9c9] ${className}`}>
      <Tri d="u" fill="#ece9db" hi="#fff" lo="#999" />
      <div className={`w-[10px] border border-b-[#8f8c80] border-l-white border-r-[#8f8c80] border-t-white bg-[#ece9db] ${thumb}`} />
      <div className="flex-1" />
      <Tri d="d" fill="#ece9db" hi="#999" lo="#fff" />
    </div>
  );
}

function Grip() {
  return <div className="h-[26px] w-[2px] shrink-0 border-l border-[#8f8c80] bg-white" />;
}

function CloseX() {
  return (
    <div className="flex h-[16px] w-[12px] shrink-0 items-center justify-center border border-b-[#8f8c80] border-l-white border-r-[#8f8c80] border-t-white bg-[#ece9db]">
      <svg width="7" height="7"><path d="M.5 .5l6 6M6.500 .5l-6 6" stroke="#000" strokeWidth="1.700" /></svg>
    </div>
  );
}

function BlueArrow({ flip, pale }: { flip?: boolean; pale?: boolean }) {
  return (
    <svg width="17" height="14" viewBox="0 0 17 14" className="shrink-0">
      <g transform={flip ? "translate(17 0) scale(-1 1)" : ""}>
        <path d="M1 4.500h8v-4l7 6.500-7 6.500v-4H1z" fill={pale ? "#9cd0ee" : "#2a9bdc"} stroke={pale ? "#15507c" : "#042c50"} strokeDasharray={pale ? "1.500 .7" : ""} />
      </g>
    </svg>
  );
}

function ChecksTable() {
  return (
    <div className="flex w-[321px] shrink-0 border border-black bg-[#ece9db] pt-px">
      <div className="flex w-[304px] shrink-0 flex-col overflow-hidden bg-white pl-[2px]">
        <div className="flex h-[19px] shrink-0 items-center border-b border-[#8f8c80] bg-[#ece9db] text-[12px] tracking-[.3px]">
          <div className="flex w-[43px] items-center gap-[7px] pl-[4px]">
            <svg width="12" height="12"><path d="M.5 .5h8v8h-8z" fill="#fff" stroke="#889" /><path d="M2 3h5M2 5h3" stroke="#23c" /><path d="M5 5h6l-2 3v3H7V8z" fill="#ddd" stroke="#888" strokeWidth=".6" /></svg>
            <svg width="17" height="15"><path d="M1 6l5-5 3 2-5 5z" fill="#e8d020" stroke="#5a5000" /><path d="M5 8h5v4h3" fill="none" stroke="#000" /><path d="M10 6l4-3 2 2-4 3z" fill="#d02050" stroke="#600" strokeWidth=".6" /><path d="M10 13l4-3 2 2-4 3z" fill="#20b0c0" stroke="#045" strokeWidth=".6" /></svg>
          </div>
          <div className="h-full w-[150px] border-r border-[#8f8c80] pl-[2px] leading-[19px]">Check / Cell</div>
          <div className="flex h-full w-[65px] items-center border-l border-r border-l-white border-r-[#8f8c80] pl-[6px] tracking-[.1px]">
            Results
            <svg width="8" height="8" className="ml-[6px]"><path d="M.5 7.500h7L4 .5" fill="none" stroke="#fff" /><path d="M.5 7.500L4 .5" stroke="#999" /></svg>
          </div>
          <div className="h-full w-[44px] border-r border-[#8f8c80] pl-[7px] leading-[19px]">Flat</div>
        </div>
        {ROWS.map(([n, a, b], i) => {
          const sel = i === 0;
          const dash = sel ? "border-y border-dotted border-y-[#e0a030] bg-[#316ac5] text-white" : "";
          return (
            <div key={i} className={`flex h-[18px] shrink-0 items-center text-[12px] tracking-[.33px] ${i % 2 ? "bg-[#f4f4f4]" : "bg-white"}`}>
              <div className="flex w-[43px] items-center gap-[8px] pl-[4px]">
                <svg width="9" height="9" shapeRendering="crispEdges"><path d="M.5 .5h8v8h-8zM2 4.500h5M4.500 2v5" fill="#fff" stroke="#000" /></svg>
                <svg width="12" height="12"><path d="M2 1.500l8 9M10 1.500l-8 9" stroke="#8c1515" strokeWidth="3.400" /><path d="M2 1.500l8 9M10 1.500l-8 9" stroke="#e23a3a" strokeWidth="2.200" /></svg>
              </div>
              <div className={`flex h-full w-[151px] items-center border-r !border-r-[#8f8c80] pl-[2px] [border-right-style:solid] ${dash}`}>Check {n}</div>
              <div className={`flex h-full w-[65px] items-center border-r !border-r-[#8f8c80] [border-right-style:solid] ${dash}`}>{a}</div>
              <div className={`flex h-full w-[43px] items-center border-r !border-r-[#8f8c80] [border-right-style:solid] ${dash}`}>{b}</div>
            </div>
          );
        })}
      </div>
      <div className="flex flex-1 flex-col pl-[3px] pt-[16px]"><Scroll thumb="h-[23px] mt-px" className="flex-1" /></div>
    </div>
  );
}

function RightWindow() {
  const ids = Array.from({ length: 84 }, (_, i) => 2178 + i);
  return (
    <div className="flex h-[730px] w-[675px] shrink-0 flex-col bg-[#ece9db] text-[12px]">
      <div className="flex h-[31px] shrink-0 items-center bg-white pb-[2px] pl-[7px] pr-[16px]">
        <XLogo />
        <span className="ml-[6px] flex-1 font-['Open_Sans',sans-serif] text-[12px] tracking-[-.4px]">Calibre - RVE v2017.4_35.25 : drc_results.db</span>
        <WinControls color="#000" gap="gap-[35px]" />
      </div>
      <div className="flex h-[28px] shrink-0 items-center border-b border-[#8f8c80] pb-px pl-[8px] tracking-[.2px]">
        <div className="w-[34px]"><Mn t="&File" /></div>
        <div className="w-[41px]"><Mn t="&View" /></div>
        <div className="w-[62px]"><Mn t="&Highlight" /></div>
        <div className="w-[43px]"><Mn t="&Tools" /></div>
        <div className="w-[57px]"><Mn t="&Window" /></div>
        <div className="flex-1"><Mn t="&Setup" /></div>
        <div className="pr-[7px]"><Mn t="H&elp" /></div>
      </div>
      <div className="flex h-[31px] shrink-0 border-t border-white">
        <div className="flex w-[145px] items-center border-r border-[#8f8c80] pl-[4px]">
          <Grip />
          <svg width="18" height="16" className="ml-[11px]"><path d="M1 4h6l2 2h5v9H3z" fill="#d99a10" /><path d="M4 3l11-2-1 9z" fill="#fff" stroke="#999" strokeWidth=".5" /><path d="M5 7l12-3-4 10-10 1z" fill="#ffd75a" stroke="#b87f00" strokeWidth=".7" /></svg>
          <div className="ml-[5px]"><Grip /></div>
          <svg width="19" height="18" className="ml-[5px]"><path d="M6 9l7-8 5 3-8 8z" fill="#f4b070" stroke="#c86a30" strokeWidth=".6" /><path d="M13 1l5 3-3 3-5-3z" fill="#e05030" /><circle cx="5" cy="12.500" r="2.600" fill="#ff0" stroke="#000" /><path d="M5 8v2M5 15v3M0 12h2M8 12h2M1.500 9l1 1M8.500 16l-1-1M1 16l1-1" stroke="#000" /></svg>
          <svg width="19" height="18" className="ml-[8px]"><circle cx="8" cy="6" r="4.500" fill="#dff" stroke="#777" strokeWidth="1.500" /><path d="M11 10l5 6" stroke="#777" strokeWidth="3" /><circle cx="6" cy="12.500" r="2.600" fill="#ff0" stroke="#000" /><path d="M6 8v2M6 15v3M1 12h2M9 12h2M2 9l2 1M2 16l2-1" stroke="#000" /></svg>
          <Down className="mb-[9px]" />
          <div className="ml-[9px]"><Grip /></div>
          <svg width="17" height="17" viewBox="0 0 17 17" className="ml-[8px]"><circle cx="8.500" cy="8.500" r="6.700" fill="#6fa3d8" stroke="#4479b0" strokeWidth="2.400" strokeDasharray="2.200 1.500" /><circle cx="8.500" cy="8.500" r="5.800" fill="#6fa3d8" /><circle cx="8.500" cy="8.500" r="2.200" fill="#dceaf8" /></svg>
        </div>
        <div className="flex w-[124px] items-center border-l border-r border-l-white border-r-[#8f8c80] pl-[4px]">
          <Grip />
          <div className="ml-[10px] flex h-[19px] w-[20px] items-center justify-center border border-[#8f8c80] bg-[#d6d3c6]">
            <svg width="18" height="17"><path d="M3 2.500h7l4 3v9H6v-2H3M0 5.500h3M0 9.500h5M3 2v8" fill="none" stroke="#000" /><circle cx="11" cy="10.500" r="2.600" fill="#ff0" stroke="#000" /><path d="M11 6v2M11 13v3M6 10h2M14 10h3" stroke="#000" /></svg>
          </div>
          <div className="ml-[5px]"><Grip /></div>
          <div className="ml-[7px] flex items-center gap-[7px]"><BlueArrow flip pale /><Sun size={18} /><BlueArrow /></div>
        </div>
        <div className="flex w-[180px] items-center border-l border-r border-l-white border-r-[#8f8c80] pl-[4px]">
          <Grip />
          <div className="ml-[12px] flex h-[20px] w-[114px] items-center border-2 border-b-white border-l-[#8f8c80] border-r-white border-t-[#8f8c80] bg-white pb-[2px] pl-[3px] tracking-[.2px] text-[#666]">Search</div>
          <Down className="mb-[9px]" />
          <svg width="20" height="10" className="ml-[5px]"><path d="M6 0v10L1 5zM14 0v10l5-5z" fill="#5aa8dc" /></svg>
        </div>
      </div>
      <div className="flex h-[616px] shrink-0 flex-col border border-black px-[6px] pt-[6px]">
        <div className="flex h-[33px] shrink-0 items-start">
          <div className="flex h-[25px] w-[87px] items-center border border-b-[#8f8c80] border-l-white border-r-[#8f8c80] border-t-white pl-[6px]">
            <svg width="12" height="16"><path d="M.5 1.500h11L8 8v6l-3 2V8z" fill="#999" stroke="#666" strokeWidth=".7" /><ellipse cx="6" cy="2" rx="5" ry="1.200" fill="#ddd" /></svg>
            <span className="ml-[3px] text-[12.500px] tracking-[.1px]">Show All</span>
            <Down className="mb-[8px] ml-[6px]" />
          </div>
          <div className="flex h-[24px] flex-1 items-center">
            <svg width="14" height="12" className="ml-[9px]"><path d="M3.500 .500h7v10h-7zM0 3.500h3M0 8.500h3M11 3.500h3M11 8.500h3" fill="#fff" stroke="#000" strokeWidth="1.200" /><path d="M7 10V4M5 6l2-2.500L9 6" fill="none" stroke="#14f" strokeWidth="1.300" /></svg>
            <span className="ml-[2px] tracking-[.3px]">dot_product, 8709 Results (in 36 of 334 Checks)</span>
          </div>
          <div className="flex h-[24px] items-center pr-[4px]">
            <Marker />
            <Down className="mb-[8px] ml-[5px]" />
            <svg width="14" height="13" className="ml-[13px]"><path d="M1 1h4v4H1zM9 1h4v4H9zM1 8.500h4v4H1zM9 8.500h4v4H9z" fill="none" stroke="#000" strokeWidth="1.200" /></svg>
            <Down className="mb-[6px] ml-[4px]" />
          </div>
        </div>
        <div className="flex h-[407px] shrink-0 gap-[4px]">
          <ChecksTable />
          <div className="flex w-[337px] flex-col gap-[4px]">
            <div className="flex h-[285px] shrink-0 border border-black bg-white">
              <div className="flex-1 overflow-hidden pl-[2px] pt-px">
                <div className="grid auto-rows-[20px] grid-cols-[repeat(6,48px)] items-center text-[12px] font-bold tracking-[.33px] text-[#ff4000]">
                  {ids.map((n) => <span key={n}>{n}</span>)}
                </div>
              </div>
              <Scroll thumb="h-[23px]" />
            </div>
            <div className="flex flex-1 border border-black bg-white">
              <div className="flex-1 bg-white" />
              <div className="flex w-[13px] flex-col bg-[#ece9db]"><CloseX /><Scroll thumb="h-[77px]" className="flex-1" /></div>
            </div>
          </div>
        </div>
        <div className="mt-[5px] flex h-[157px] shrink-0 border border-black bg-white">
          <div className="flex-1 whitespace-pre pl-[2px] pt-[3px] font-['Liberation_Mono',monospace] text-[11.667px] leading-[13px]">
            <div>Rule File Pathname:</div>
            <div className="text-[#0000e6]">/home/cc/eecs151/fa20/staff/eecs151-taa/eecs151/lab6/build/drc-rundir/drc_run_file</div>
            <div>V1.M1.EN.1</div>
            <div>Minimum enclosure of V1 by M1 on two opposite sides is 5 &amp; 2 nm.</div>
          </div>
          <div className="flex w-[15px] flex-col bg-[#ece9db] pl-[2px]"><CloseX /><Scroll thumb="h-[115px]" className="flex-1" /></div>
        </div>
      </div>
      <div className="flex flex-1 items-center border-b border-b-[#8f8c80] pl-[4px]">
        <svg width="14" height="14"><circle cx="7" cy="7" r="6.500" fill="#1d50c8" stroke="#0b2f85" /><path d="M8 2.500v2M7.500 6l-1 5.500" stroke="#fff" strokeWidth="1.800" /></svg>
        <span className="ml-[2px] flex-1 tracking-[.3px]">Check V1.M1.EN.1</span>
        <div className="flex h-full w-[75px] items-center border-l border-[#8f8c80] pl-[4px]">
          <div className="h-[12px] w-[32px] border border-b-white border-l-[#0c0] border-r-white border-t-[#8f8c80]"><div className="h-full w-[8px] bg-[#bbb]" /></div>
          <svg width="14" height="14" className="ml-[8px]"><path d="M1 1h5v6h7v6H1z" fill="#f4f4a0" stroke="#28a8d8" strokeWidth="1.400" /><path d="M4 3v8h7" fill="none" stroke="#d22" strokeWidth="2" /><path d="M9 1h4v4H9z" fill="#2a2" /></svg>
          <Down className="mb-[7px] ml-[5px]" />
        </div>
      </div>
    </div>
  );
}

export default function App() {
  return (
    <div className={`flex h-[732px] w-[1598px] overflow-hidden bg-[#33343a] pl-[2px] pt-px text-black ${SANS}`}>
      <LeftWindow />
      <div className="w-px shrink-0" />
      <RightWindow />
    </div>
  );
}
